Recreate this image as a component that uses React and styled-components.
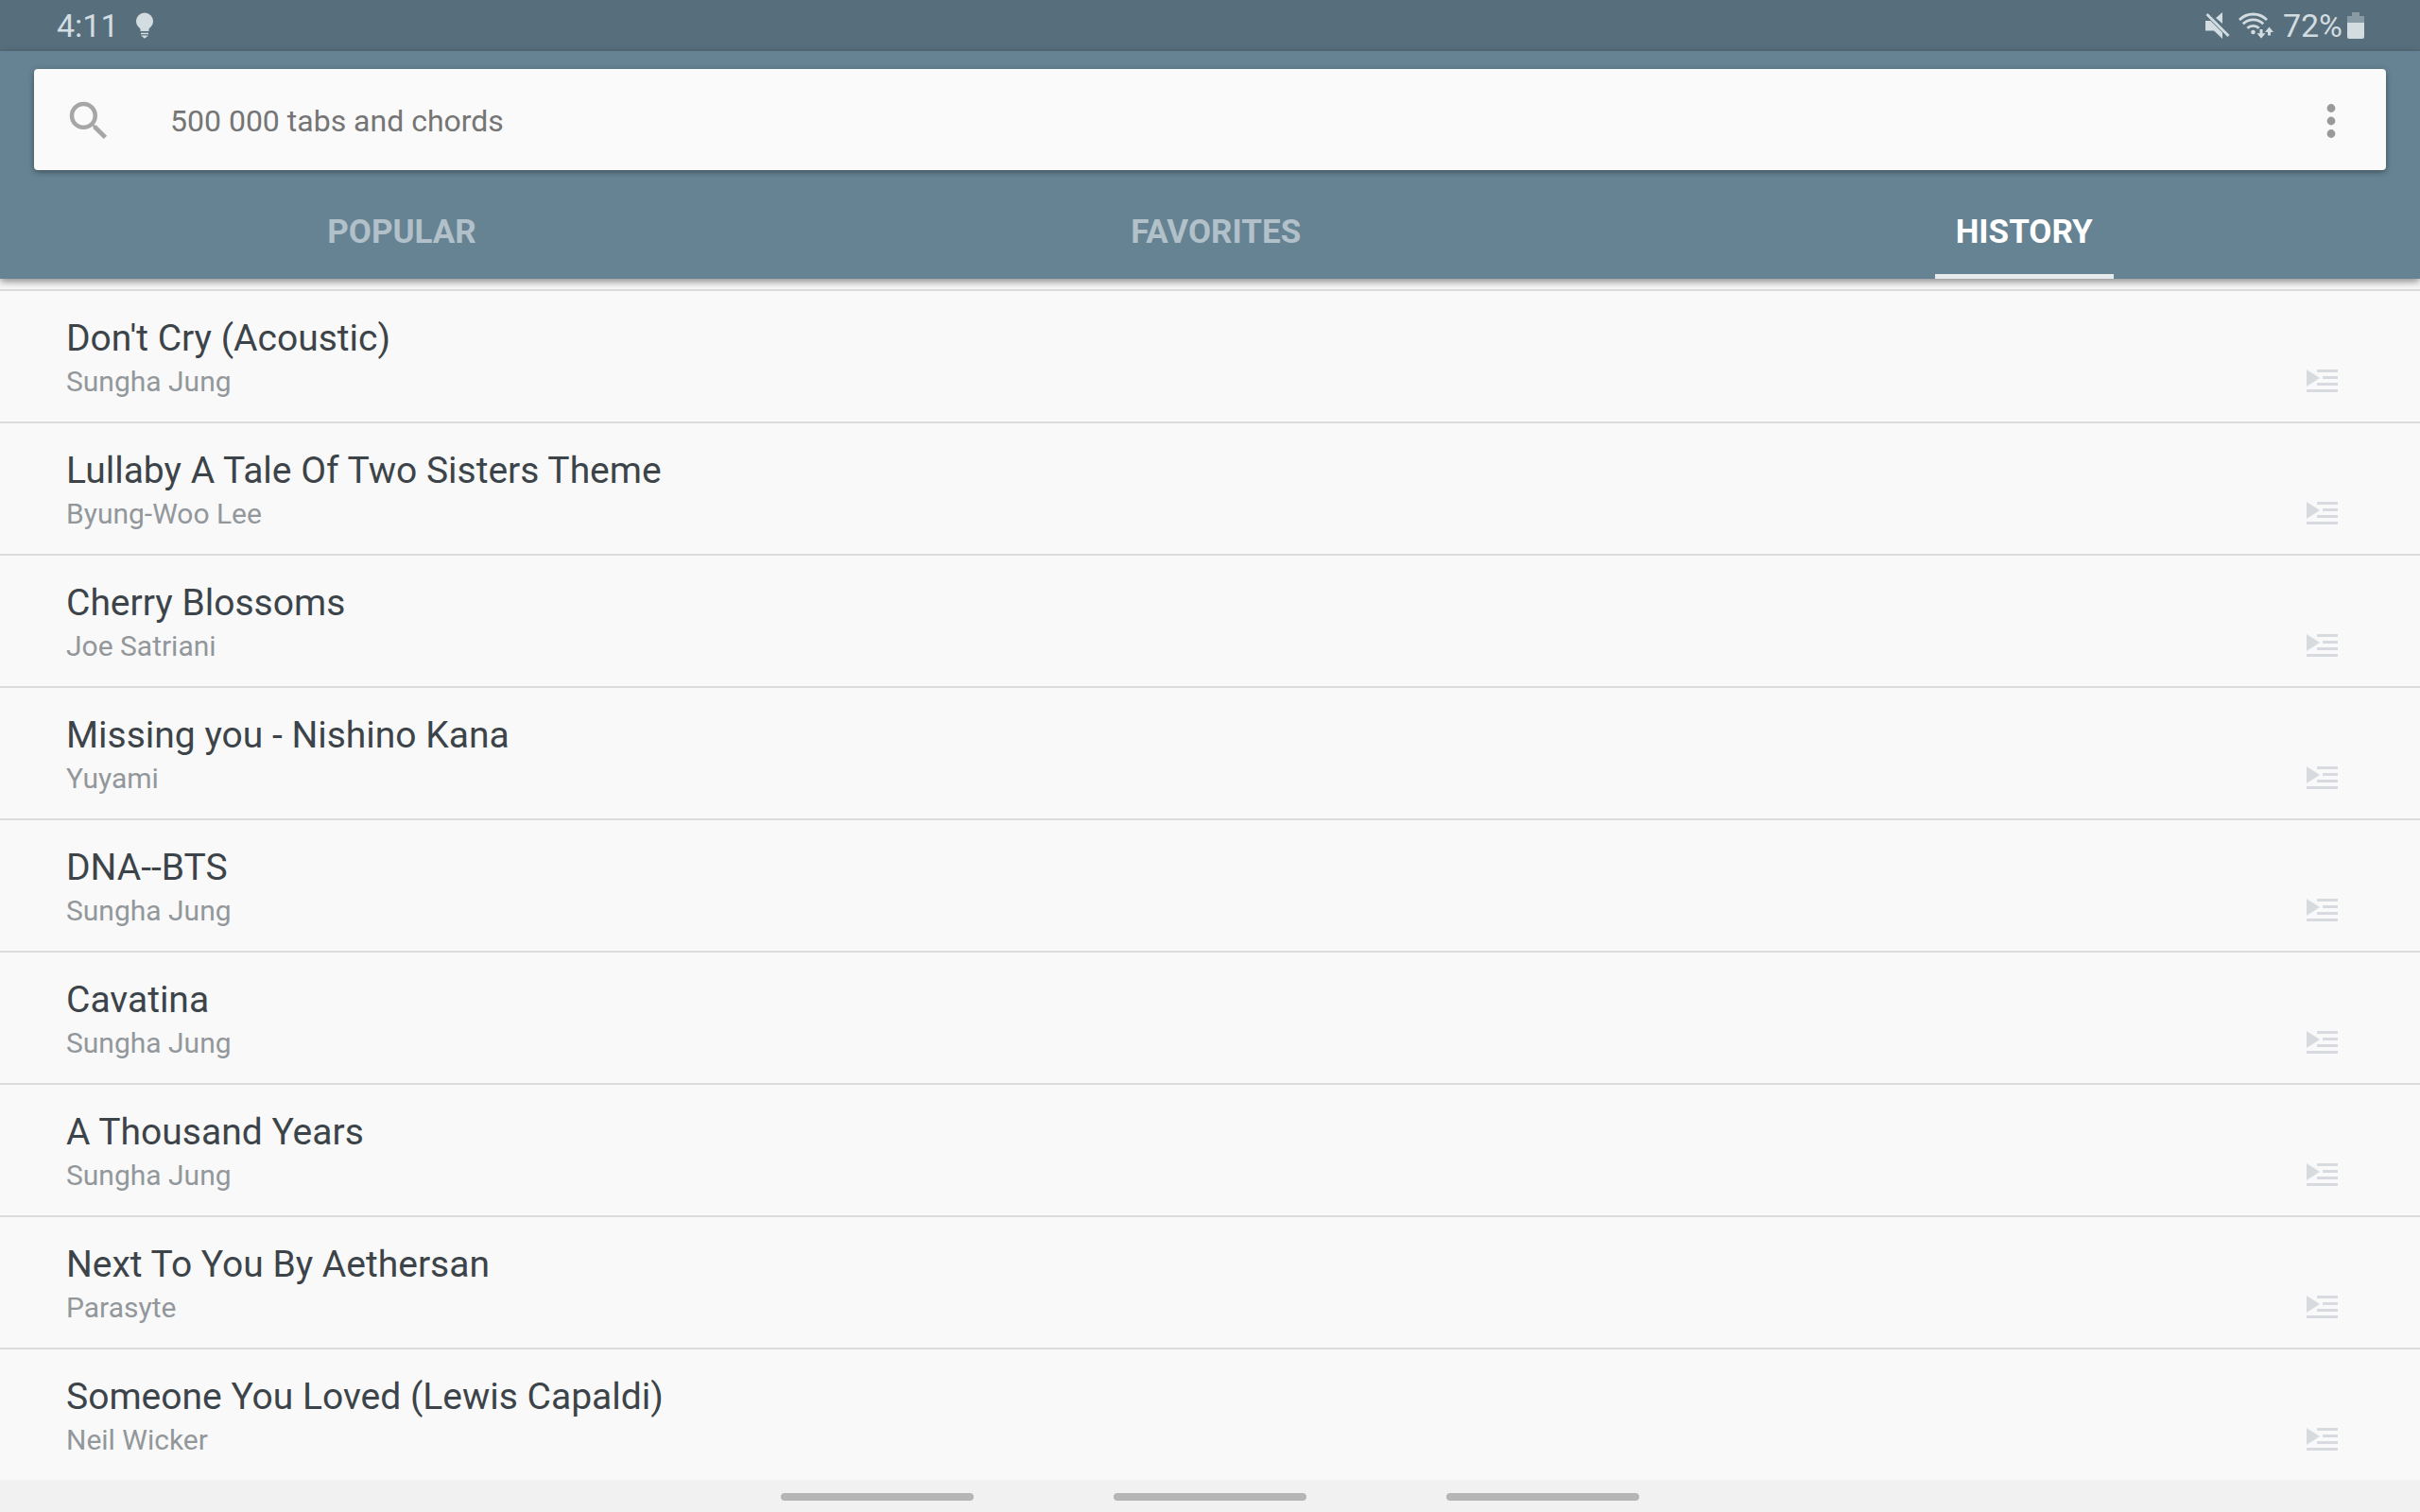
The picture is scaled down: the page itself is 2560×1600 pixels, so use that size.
import React from "react";
import styled, { createGlobalStyle } from "styled-components";

const Global = createGlobalStyle`
  * { box-sizing: border-box; }
  body { margin: 0; background: #f9f9f9; font-family: Roboto, "Noto Sans", sans-serif; }
  button, input { font: inherit; color: inherit; border: 0; padding: 0; margin: 0; background: none; }
  svg { display: block; }
`;

const Screen = styled.div`
  display: flex;
  flex-direction: column;
  min-height: 100vh;
`;

const StatusBar = styled.div`
  display: flex;
  justify-content: space-between;
  align-items: center;
  height: 54px;
  padding: 0 59px 0 60px;
  background: #576f7c;
  color: #d3dce0;
  font-size: 34px;
  line-height: 40px;
`;

const StatusGroup = styled.div`
  display: flex;
  align-items: center;
  gap: ${(p) => p.$gap}px;
`;

const Header = styled.header`
  display: flex;
  flex-direction: column;
  background: #668393;
  padding-top: 19px;
  position: relative;
  box-shadow: 0 3px 8px rgba(0, 0, 0, 0.45);
`;

const SearchCard = styled.form`
  display: flex;
  align-items: center;
  height: 107px;
  margin: 0 36px;
  padding: 2px 31px 0;
  border-radius: 4px;
  background: #fafafa;
  box-shadow: 0 2px 6px rgba(0, 0, 0, 0.4);
`;

const IconButton = styled.button`
  flex: none;
  color: ${(p) => p.$color};
`;

const QueueButton = styled(IconButton)`
  padding-bottom: 7px;
`;

const SearchInput = styled.input`
  flex: 1;
  min-width: 0;
  margin-left: 59px;
  font-size: 32px;
  line-height: 40px;
  color: #757575;
  outline: none;
  &::placeholder { color: #757575; opacity: 1; }
`;

const Tabs = styled.nav`
  display: flex;
  height: 115px;
`;

const Tab = styled.button`
  flex: 1 1 auto;
  display: flex;
  justify-content: center;
  font-size: 35px;
  line-height: 40px;
  font-weight: 700;
  color: ${(p) => (p.$active ? "#ffffff" : "#b2c1c9")};
`;

const TabLabel = styled.span`
  display: flex;
  align-items: center;
  height: 115px;
  padding: 21px 22px 0;
  border-bottom: 5px solid ${(p) => (p.$active ? "#e6eaed" : "transparent")};
`;

const List = styled.ul`
  flex: 1;
  margin: 0;
  padding: 11px 0 0;
  list-style: none;
`;

const Row = styled.li`
  display: flex;
  justify-content: space-between;
  align-items: flex-end;
  height: 140px;
  border-top: 2px solid #dadbdb;
  padding: 0 87px 24px 70px;
`;

const Song = styled.div`
  display: flex;
  flex-direction: column;
  gap: 4px;
`;

const Title = styled.div`
  font-size: 39px;
  line-height: 48px;
  color: #3c4449;
`;

const Artist = styled.div`
  font-size: 30px;
  line-height: 36px;
  color: #92979b;
`;

const NavBar = styled.div`
  display: flex;
  justify-content: center;
  align-items: center;
  gap: 148px;
  height: 34px;
  padding-top: 2px;
  background: #f1f1f1;
`;

const NavPill = styled.button`
  width: 204px;
  height: 8px;
  border-radius: 4px;
  background: #b5b5b5;
`;

const songs = [
  ["Don't Cry (Acoustic)", "Sungha Jung"],
  ["Lullaby A Tale Of Two Sisters Theme", "Byung-Woo Lee"],
  ["Cherry Blossoms", "Joe Satriani"],
  ["Missing you - Nishino Kana", "Yuyami"],
  ["DNA--BTS", "Sungha Jung"],
  ["Cavatina", "Sungha Jung"],
  ["A Thousand Years", "Sungha Jung"],
  ["Next To You By Aethersan", "Parasyte"],
  ["Someone You Loved (Lewis Capaldi)", "Neil Wicker"],
];

const Bulb = () => (
  <svg width="18" height="28" viewBox="0 0 18 28" fill="currentColor">
    <path d="M9 0.500a9 9 0 0 1 9 9.300c0 3.500-2 5.500-4.500 7.700V20h-9v-2.500C2 15.300 0 13.300 0 9.800A9 9 0 0 1 9 0.500Z" />
    <path d="M5 21.800h8v1.400H5zM5 24.500h8l-4 3.300z" />
  </svg>
);

const Muted = () => (
  <svg width="26" height="28" viewBox="0 0 26 28" fill="currentColor">
    <path d="M18 0v12L11 6zM0 9h5.500L18 21.500V28L9 19.500H0z" />
    <path d="M1.500 2 24.500 25" stroke="currentColor" strokeWidth="2.800" fill="none" />
  </svg>
);

const Wifi = () => (
  <svg width="38" height="28" viewBox="0 0 38 28" fill="none" stroke="currentColor" strokeWidth="2.800">
    <path d="M1 8a20.500 20.500 0 0 1 29 0M4.800 12.300a15 15 0 0 1 21.400 0M9.300 16.800a9 9 0 0 1 12.400 0" />
    <circle cx="15.500" cy="21" r="2.300" fill="currentColor" stroke="none" />
    <path d="M24 18v6M32.500 24.500v-5" strokeWidth="3" />
    <path d="M19.500 22.300h9L24 27.800zM28 21h9l-4.500-5.500z" fill="currentColor" stroke="none" />
  </svg>
);

const Battery = () => (
  <svg width="18" height="28" viewBox="0 0 18 28" fill="currentColor">
    <path d="M5 0h8v4h5v7H0V4h5z" opacity="0.400" />
    <path d="M0 11h18v15a2 2 0 0 1-2 2H2a2 2 0 0 1-2-2z" />
  </svg>
);

const SearchIcon = () => (
  <svg width="54" height="54" viewBox="0 0 24 24" fill="currentColor">
    <path d="M15.500 14h-.79l-.28-.27A6.471 6.471 0 0 0 16 9.500 6.500 6.500 0 1 0 9.500 16c1.610 0 3.090-.59 4.230-1.570l.27.28v.79l5 4.990L20.490 19l-4.990-5zm-6 0C7.010 14 5 11.990 5 9.500S7.010 5 9.500 5 14 7.010 14 9.500 11.990 14 9.500 14z" />
  </svg>
);

const MoreIcon = () => (
  <svg width="54" height="54" viewBox="0 0 24 24" fill="currentColor">
    <circle cx="12" cy="6" r="1.950" />
    <circle cx="12" cy="12" r="1.950" />
    <circle cx="12" cy="18" r="1.950" />
  </svg>
);

const QueueIcon = () => (
  <svg width="33" height="24" viewBox="0 0 33 24" fill="currentColor">
    <path d="M0 0l14 9L0 18zM11 0h22v3H11zM17 7h16v3H17zM11 14h22v3H11zM0 21h33v3H0z" />
  </svg>
);

export default function App() {
  const active = "HISTORY";
  return (
    <Screen>
      <Global />
      <StatusBar>
        <StatusGroup $gap={18}>
          <span>4:11</span>
          <Bulb />
        </StatusGroup>
        <StatusGroup $gap={9}>
          <Muted />
          <Wifi />
          <StatusGroup $gap={5}>
            <span>72%</span>
            <Battery />
          </StatusGroup>
        </StatusGroup>
      </StatusBar>
      <Header>
        <SearchCard role="search" onSubmit={(e) => e.preventDefault()}>
          <IconButton $color="#a6a6a6" aria-label="Search"><SearchIcon /></IconButton>
          <SearchInput type="text" aria-label="Search tabs" placeholder="500 000 tabs and chords" />
          <IconButton $color="#999999" type="button" aria-label="More options"><MoreIcon /></IconButton>
        </SearchCard>
        <Tabs>
          {["POPULAR", "FAVORITES", "HISTORY"].map((name) => (
            <Tab key={name} type="button" $active={name === active}>
              <TabLabel $active={name === active}>{name}</TabLabel>
            </Tab>
          ))}
        </Tabs>
      </Header>
      <List>
        {songs.map(([title, artist]) => (
          <Row key={title}>
            <Song>
              <Title>{title}</Title>
              <Artist>{artist}</Artist>
            </Song>
            <QueueButton $color="#d7dbdf" type="button" aria-label={`Queue ${title}`}><QueueIcon /></QueueButton>
          </Row>
        ))}
      </List>
      <NavBar>
        <NavPill aria-label="Recent apps" />
        <NavPill aria-label="Home" />
        <NavPill aria-label="Back" />
      </NavBar>
    </Screen>
  );
}
